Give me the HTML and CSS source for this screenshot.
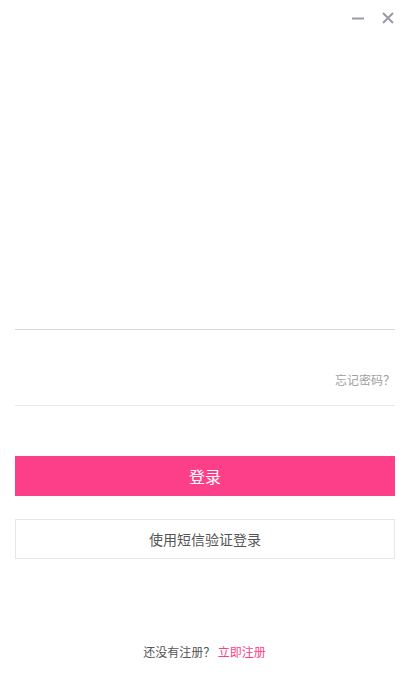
FILE: index.html
```html
<!DOCTYPE html>
<html lang="zh">
<head>
<meta charset="utf-8">
<title>登录</title>
<link rel="stylesheet" href="styles.css">
</head>
<body>
<div class="app">
  <div class="topbar">
    <button class="ctrl" aria-label="最小化">
      <svg width="14" height="14" viewBox="0 0 14 14"><path d="M1 7.5h12" stroke="#9b9ba8" stroke-width="2" fill="none"/></svg>
    </button>
    <button class="ctrl" aria-label="关闭">
      <svg width="14" height="14" viewBox="0 0 14 14"><path d="M2 2L12 12M12 2L2 12" stroke="#9b9ba8" stroke-width="2" fill="none"/></svg>
    </button>
  </div>
  <div class="form">
    <div class="field account"></div>
    <div class="field password">
      <a class="forgot" href="#">忘记密码<span class="punct">？</span></a>
    </div>
    <button class="btn primary">登录</button>
    <button class="btn outline">使用短信验证登录</button>
  </div>
  <div class="footer">还没有注册<span class="punct">？</span> <a href="#" class="reg">立即注册</a></div>
</div>
</body>
</html>
```
FILE: styles.css
```css
* { box-sizing: border-box; }
html, body { margin: 0; padding: 0; background: #fff; }
body { font-family: "Noto Sans CJK SC", "Noto Sans", sans-serif; }
.app { width: 411px; height: 686px; display: flex; flex-direction: column; }
.topbar { height: 36px; display: flex; justify-content: flex-end; align-items: center; padding-right: 16px; gap: 16px; }
.ctrl { border: 0; background: none; padding: 0; width: 14px; height: 14px; display: flex; cursor: pointer; }
.form { padding: 0 16px 0 15px; display: flex; flex-direction: column; }
.field { border-bottom: 1px solid #d8d8d8; }
.account { height: 294px; }
.password { height: 76px; border-bottom-color: #e8e8e8; display: flex; justify-content: flex-end; align-items: flex-end; padding-bottom: 17px; }
.forgot { font-size: 12px; line-height: 16px; color: #a0a0a0; text-decoration: none; padding-right: 0; }
.punct { font-family: "Noto Sans CJK TC", "Noto Sans CJK SC", sans-serif; }
.btn { font-family: inherit; width: 100%; height: 40px; border: 0; padding: 0; display: flex; align-items: center; justify-content: center; cursor: pointer; }
.primary { margin-top: 50px; background: #fd3f8a; color: #fff; font-size: 16px; }
.outline { margin-top: 23px; background: #fff; border: 1px solid #e6e6e6; color: #555; font-size: 14px; }
.footer { margin-top: auto; height: 42px; text-align: center; font-size: 12px; line-height: 16px; color: #555; padding-right: 2px; }
.reg { color: #fd3f8a; text-decoration: none; }
```
